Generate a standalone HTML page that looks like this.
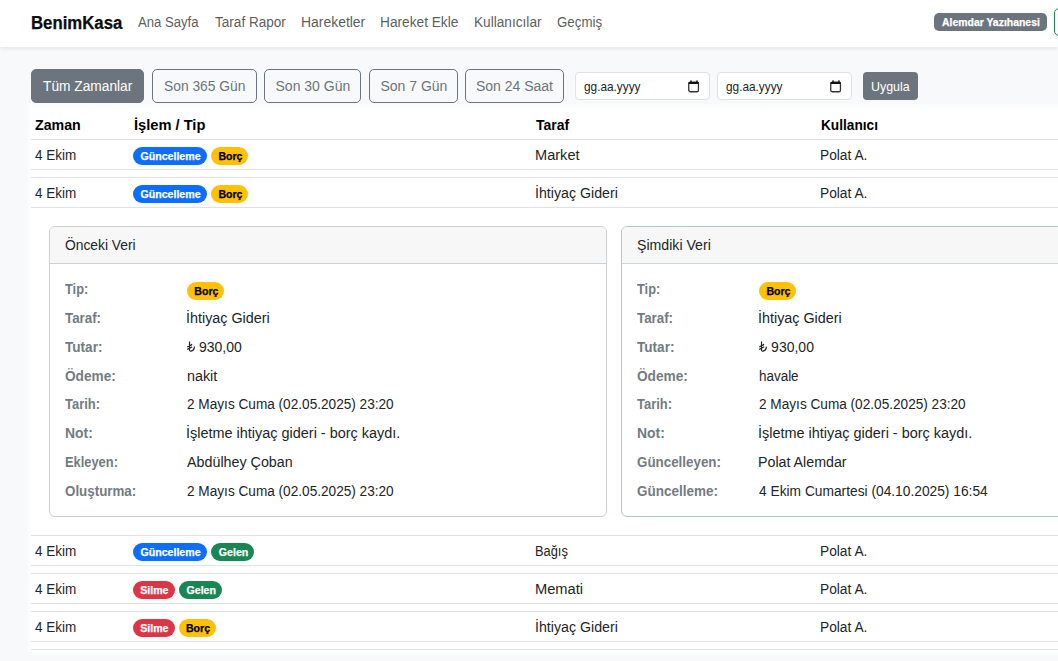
<!DOCTYPE html>
<html><head><meta charset="utf-8"><style>
*{box-sizing:border-box;margin:0;padding:0}
html,body{width:1058px;height:661px;overflow:hidden;background:#f8f9fa;font-family:"Liberation Sans",sans-serif;color:#212529}
#root{position:relative;width:1058px;height:661px;overflow:hidden;background:#f8f9fa}
.a{position:absolute}
.t{position:absolute;white-space:nowrap;line-height:1;transform-origin:0 0}
.nav{position:absolute;left:0;top:0;width:1058px;height:47px;background:#fff;box-shadow:0 2px 4px rgba(0,0,0,.075)}
.tbl{position:absolute;left:31px;top:110px;width:1100px;height:540px;background:#fff;}
.ln{position:absolute;left:31px;width:1100px;height:1px;background:#dee2e6}
.card{position:absolute;top:226px;height:291px;border:1px solid #cdd0d2;border-radius:6px;background:#fff;overflow:hidden}
.ch{position:absolute;left:0;top:0;right:0;height:37px;background:#f7f7f7;border-bottom:1px solid #cdd0d2}
</style></head><body><div id="root">
<div class="nav"></div>
<div class="a" style="left:934px;top:13px;width:113px;height:18px;border-radius:5px;background:#6c757d"></div>
<div class="a" style="left:1054px;top:8px;width:40px;height:28px;border:1px solid #198754;border-radius:5px"></div>
<div class="a" style="left:31px;top:69px;width:113.0px;height:34px;border:1px solid #6c757d;border-radius:5px;background:#6c757d;"></div>
<div class="a" style="left:152px;top:69px;width:105.0px;height:34px;border:1px solid #6c757d;border-radius:5px;"></div>
<div class="a" style="left:264px;top:69px;width:97.0px;height:34px;border:1px solid #6c757d;border-radius:5px;"></div>
<div class="a" style="left:369px;top:69px;width:89.0px;height:34px;border:1px solid #6c757d;border-radius:5px;"></div>
<div class="a" style="left:465px;top:69px;width:99.0px;height:34px;border:1px solid #6c757d;border-radius:5px;"></div>
<div class="a" style="left:575px;top:72px;width:135px;height:28px;background:#fff;border:1px solid #dee2e6;border-radius:4px"></div>
<svg class="a" width="12" height="13" viewBox="0 0 12 13" style="left:688px;top:79.6px"><path d="M2.6 2.4L3 0.5L3.4 2.4M8.6 2.4L9 0.5L9.4 2.4" fill="#111" stroke="#111" stroke-width="0.9"/><rect x="0.75" y="2.25" width="9.7" height="9.5" rx="1.6" fill="none" stroke="#333" stroke-width="1.3"/><rect x="0.4" y="1.9" width="10.4" height="2.2" rx="0.8" fill="#111"/></svg>
<div class="a" style="left:717px;top:72px;width:135px;height:28px;background:#fff;border:1px solid #dee2e6;border-radius:4px"></div>
<svg class="a" width="12" height="13" viewBox="0 0 12 13" style="left:830px;top:79.6px"><path d="M2.6 2.4L3 0.5L3.4 2.4M8.6 2.4L9 0.5L9.4 2.4" fill="#111" stroke="#111" stroke-width="0.9"/><rect x="0.75" y="2.25" width="9.7" height="9.5" rx="1.6" fill="none" stroke="#333" stroke-width="1.3"/><rect x="0.4" y="1.9" width="10.4" height="2.2" rx="0.8" fill="#111"/></svg>
<div class="a" style="left:863px;top:72px;width:55px;height:28px;border-radius:4px;background:#6c757d"></div>
<div class="tbl"></div><div class="a" style="left:26px;top:103px;width:1100px;height:8px;background:linear-gradient(#f8f9fa,#fff)"></div><div class="a" style="left:26px;top:103px;width:6px;height:548px;background:linear-gradient(to right,#f8f9fa,#fff)"></div><div class="a" style="left:32px;top:650px;width:1100px;height:6px;background:linear-gradient(#fff,#f8f9fa)"></div>
<div class="ln" style="top:139px"></div>
<div class="ln" style="top:169px"></div>
<div class="ln" style="top:177px"></div>
<div class="ln" style="top:207px"></div>
<div class="ln" style="top:535px"></div>
<div class="ln" style="top:565px"></div>
<div class="ln" style="top:573px"></div>
<div class="ln" style="top:603px"></div>
<div class="ln" style="top:611px"></div>
<div class="ln" style="top:641px"></div>
<div class="ln" style="top:649px"></div>
<div class="a" style="left:133px;top:147.3px;width:74px;height:18.2px;border-radius:9.1px;background:#0d6efd"></div>
<div class="a" style="left:211.4px;top:147.3px;width:37px;height:18.2px;border-radius:9.1px;background:#ffc107"></div>
<div class="a" style="left:133px;top:185.1px;width:74px;height:18.2px;border-radius:9.1px;background:#0d6efd"></div>
<div class="a" style="left:211.4px;top:185.1px;width:37px;height:18.2px;border-radius:9.1px;background:#ffc107"></div>
<div class="a" style="left:133px;top:543.0px;width:74px;height:18.2px;border-radius:9.1px;background:#0d6efd"></div>
<div class="a" style="left:211.4px;top:543.0px;width:42.7px;height:18.2px;border-radius:9.1px;background:#198754"></div>
<div class="a" style="left:133px;top:581.1px;width:41.7px;height:18.2px;border-radius:9.1px;background:#dc3545"></div>
<div class="a" style="left:179.1px;top:581.1px;width:42.6px;height:18.2px;border-radius:9.1px;background:#198754"></div>
<div class="a" style="left:133px;top:619.2px;width:41.7px;height:18.2px;border-radius:9.1px;background:#dc3545"></div>
<div class="a" style="left:179.1px;top:619.2px;width:36.8px;height:18.2px;border-radius:9.1px;background:#ffc107"></div>
<div class="card" style="left:49px;width:558px"><div class="ch"></div></div>
<div class="card" style="left:621px;width:558px;border-color:#adcbc0"><div class="ch" style="border-bottom-color:#cdd3d1"></div></div>
<div class="a" style="left:187.3px;top:282.0px;width:37px;height:18px;border-radius:9.0px;background:#ffc107"></div>
<svg class="a" width="9" height="11" viewBox="0 0 9 11" style="left:186.7px;top:341.39px"><path d="M2.5 0.4V8.8Q2.5 10.3 3.9 10.1Q7.2 9.4 7.5 5.6M0.2 6L5.2 3.4M0.2 8.4L5.2 5.8" fill="none" stroke="#212529" stroke-width="1.2"/></svg>
<div class="a" style="left:759.4px;top:282.0px;width:37px;height:18px;border-radius:9.0px;background:#ffc107"></div>
<svg class="a" width="9" height="11" viewBox="0 0 9 11" style="left:758.8px;top:341.39px"><path d="M2.5 0.4V8.8Q2.5 10.3 3.9 10.1Q7.2 9.4 7.5 5.6M0.2 6L5.2 3.4M0.2 8.4L5.2 5.8" fill="none" stroke="#212529" stroke-width="1.2"/></svg>
<div class="t" style="left:30.87px;top:14.16px;font-size:18px;font-weight:700;color:#0d0d0d;transform:scaleX(0.9313);-webkit-text-stroke:0.25px currentColor;">BenimKasa</div>
<div class="t" style="left:138.40px;top:14.85px;font-size:14px;font-weight:400;color:#5c5f62;transform:scaleX(0.9365);">Ana Sayfa</div>
<div class="t" style="left:215.30px;top:14.85px;font-size:14px;font-weight:400;color:#5c5f62;transform:scaleX(0.9689);">Taraf Rapor</div>
<div class="t" style="left:301.40px;top:14.85px;font-size:14px;font-weight:400;color:#5c5f62;transform:scaleX(0.9950);">Hareketler</div>
<div class="t" style="left:380.32px;top:14.85px;font-size:14px;font-weight:400;color:#5c5f62;transform:scaleX(0.9778);">Hareket Ekle</div>
<div class="t" style="left:473.82px;top:14.85px;font-size:14px;font-weight:400;color:#5c5f62;transform:scaleX(0.9753);">Kullanıcılar</div>
<div class="t" style="left:556.70px;top:14.85px;font-size:14px;font-weight:400;color:#5c5f62;transform:scaleX(0.9505);">Geçmiş</div>
<div class="t" style="left:941.50px;top:16.69px;font-size:11px;font-weight:700;color:#fff;transform:scaleX(0.9490);-webkit-text-stroke:0.25px currentColor;">Alemdar Yazıhanesi</div>
<div class="t" style="left:42.70px;top:79.05px;font-size:14px;font-weight:400;color:#fff;transform:scaleX(0.9808);">Tüm Zamanlar</div>
<div class="t" style="left:163.80px;top:79.05px;font-size:14px;font-weight:400;color:#6c757d;transform:scaleX(0.9863);">Son 365 Gün</div>
<div class="t" style="left:275.53px;top:79.05px;font-size:14px;font-weight:400;color:#6c757d;">Son 30 Gün</div>
<div class="t" style="left:380.42px;top:79.05px;font-size:14px;font-weight:400;color:#6c757d;">Son 7 Gün</div>
<div class="t" style="left:475.91px;top:79.05px;font-size:14px;font-weight:400;color:#6c757d;">Son 24 Saat</div>
<div class="t" style="left:583.50px;top:79.80px;font-size:13px;font-weight:400;color:#212529;transform:scaleX(0.9083);">gg.aa.yyyy</div>
<div class="t" style="left:725.50px;top:79.80px;font-size:13px;font-weight:400;color:#212529;transform:scaleX(0.9083);">gg.aa.yyyy</div>
<div class="t" style="left:870.57px;top:79.74px;font-size:13.3px;font-weight:400;color:#fff;transform:scaleX(0.9343);">Uygula</div>
<div class="t" style="left:34.80px;top:118.05px;font-size:14px;font-weight:700;color:#000;transform:scaleX(1.0141);">Zaman</div>
<div class="t" style="left:134.20px;top:118.05px;font-size:14px;font-weight:700;color:#000;transform:scaleX(1.0465);">İşlem / Tip</div>
<div class="t" style="left:536.00px;top:118.05px;font-size:14px;font-weight:700;color:#000;">Taraf</div>
<div class="t" style="left:820.80px;top:118.05px;font-size:14px;font-weight:700;color:#000;transform:scaleX(0.9764);">Kullanıcı</div>
<div class="t" style="left:34.80px;top:148.25px;font-size:14px;font-weight:400;color:#212529;transform:scaleX(0.9638);">4 Ekim</div>
<div class="t" style="left:535.16px;top:148.25px;font-size:14px;font-weight:400;color:#212529;transform:scaleX(1.0407);">Market</div>
<div class="t" style="left:819.82px;top:148.25px;font-size:14px;font-weight:400;color:#212529;transform:scaleX(0.9822);">Polat A.</div>
<div class="t" style="left:140.52px;top:150.93px;font-size:10.6px;font-weight:700;color:#fff;-webkit-text-stroke:0.25px currentColor;">Güncelleme</div>
<div class="t" style="left:218.38px;top:150.93px;font-size:10.6px;font-weight:700;color:#000;-webkit-text-stroke:0.25px currentColor;">Borç</div>
<div class="t" style="left:34.80px;top:186.05px;font-size:14px;font-weight:400;color:#212529;transform:scaleX(0.9638);">4 Ekim</div>
<div class="t" style="left:535.19px;top:186.05px;font-size:14px;font-weight:400;color:#212529;transform:scaleX(1.0138);">İhtiyaç Gideri</div>
<div class="t" style="left:819.82px;top:186.05px;font-size:14px;font-weight:400;color:#212529;transform:scaleX(0.9822);">Polat A.</div>
<div class="t" style="left:140.52px;top:188.73px;font-size:10.6px;font-weight:700;color:#fff;-webkit-text-stroke:0.25px currentColor;">Güncelleme</div>
<div class="t" style="left:218.38px;top:188.73px;font-size:10.6px;font-weight:700;color:#000;-webkit-text-stroke:0.25px currentColor;">Borç</div>
<div class="t" style="left:34.80px;top:543.95px;font-size:14px;font-weight:400;color:#212529;transform:scaleX(0.9638);">4 Ekim</div>
<div class="t" style="left:535.28px;top:543.95px;font-size:14px;font-weight:400;color:#212529;transform:scaleX(0.9167);">Bağış</div>
<div class="t" style="left:819.82px;top:543.95px;font-size:14px;font-weight:400;color:#212529;transform:scaleX(0.9822);">Polat A.</div>
<div class="t" style="left:140.52px;top:546.63px;font-size:10.6px;font-weight:700;color:#fff;-webkit-text-stroke:0.25px currentColor;">Güncelleme</div>
<div class="t" style="left:218.87px;top:546.63px;font-size:10.6px;font-weight:700;color:#fff;-webkit-text-stroke:0.25px currentColor;">Gelen</div>
<div class="t" style="left:34.80px;top:582.05px;font-size:14px;font-weight:400;color:#212529;transform:scaleX(0.9638);">4 Ekim</div>
<div class="t" style="left:535.15px;top:582.05px;font-size:14px;font-weight:400;color:#212529;transform:scaleX(1.0472);">Memati</div>
<div class="t" style="left:819.82px;top:582.05px;font-size:14px;font-weight:400;color:#212529;transform:scaleX(0.9822);">Polat A.</div>
<div class="t" style="left:140.26px;top:584.73px;font-size:10.6px;font-weight:700;color:#fff;-webkit-text-stroke:0.25px currentColor;">Silme</div>
<div class="t" style="left:186.52px;top:584.73px;font-size:10.6px;font-weight:700;color:#fff;-webkit-text-stroke:0.25px currentColor;">Gelen</div>
<div class="t" style="left:34.80px;top:620.15px;font-size:14px;font-weight:400;color:#212529;transform:scaleX(0.9638);">4 Ekim</div>
<div class="t" style="left:535.19px;top:620.15px;font-size:14px;font-weight:400;color:#212529;transform:scaleX(1.0138);">İhtiyaç Gideri</div>
<div class="t" style="left:819.82px;top:620.15px;font-size:14px;font-weight:400;color:#212529;transform:scaleX(0.9822);">Polat A.</div>
<div class="t" style="left:140.26px;top:622.83px;font-size:10.6px;font-weight:700;color:#fff;-webkit-text-stroke:0.25px currentColor;">Silme</div>
<div class="t" style="left:185.98px;top:622.83px;font-size:10.6px;font-weight:700;color:#000;-webkit-text-stroke:0.25px currentColor;">Borç</div>
<div class="t" style="left:64.80px;top:238.05px;font-size:14px;font-weight:400;color:#212529;transform:scaleX(0.9864);">Önceki Veri</div>
<div class="t" style="left:64.80px;top:282.05px;font-size:14px;font-weight:700;color:#737b82;transform:scaleX(0.9135);">Tip:</div>
<div class="t" style="left:194.28px;top:285.63px;font-size:10.6px;font-weight:700;color:#000;-webkit-text-stroke:0.25px currentColor;">Borç</div>
<div class="t" style="left:64.80px;top:310.89px;font-size:14px;font-weight:700;color:#737b82;transform:scaleX(0.9517);">Taraf:</div>
<div class="t" style="left:186.28px;top:310.89px;font-size:14px;font-weight:400;color:#212529;transform:scaleX(1.0250);">İhtiyaç Gideri</div>
<div class="t" style="left:64.80px;top:339.74px;font-size:14px;font-weight:700;color:#737b82;transform:scaleX(0.9694);">Tutar:</div>
<div class="t" style="left:199.00px;top:339.74px;font-size:14px;font-weight:400;color:#212529;">930,00</div>
<div class="t" style="left:64.80px;top:368.58px;font-size:14px;font-weight:700;color:#737b82;transform:scaleX(0.9755);">Ödeme:</div>
<div class="t" style="left:187.30px;top:368.58px;font-size:14px;font-weight:400;color:#212529;transform:scaleX(1.0242);">nakit</div>
<div class="t" style="left:64.80px;top:397.42px;font-size:14px;font-weight:700;color:#737b82;transform:scaleX(0.9250);">Tarih:</div>
<div class="t" style="left:187.30px;top:397.42px;font-size:14px;font-weight:400;color:#212529;transform:scaleX(0.9729);">2 Mayıs Cuma (02.05.2025) 23:20</div>
<div class="t" style="left:64.80px;top:426.27px;font-size:14px;font-weight:700;color:#737b82;transform:scaleX(0.9955);">Not:</div>
<div class="t" style="left:186.27px;top:426.27px;font-size:14px;font-weight:400;color:#212529;transform:scaleX(1.0318);">İşletme ihtiyaç gideri - borç kaydı.</div>
<div class="t" style="left:64.80px;top:455.11px;font-size:14px;font-weight:700;color:#737b82;transform:scaleX(0.9188);">Ekleyen:</div>
<div class="t" style="left:187.30px;top:455.11px;font-size:14px;font-weight:400;color:#212529;transform:scaleX(1.0211);">Abdülhey Çoban</div>
<div class="t" style="left:64.80px;top:483.95px;font-size:14px;font-weight:700;color:#737b82;transform:scaleX(0.9539);">Oluşturma:</div>
<div class="t" style="left:187.30px;top:483.95px;font-size:14px;font-weight:400;color:#212529;transform:scaleX(0.9729);">2 Mayıs Cuma (02.05.2025) 23:20</div>
<div class="t" style="left:636.60px;top:238.05px;font-size:14px;font-weight:400;color:#212529;transform:scaleX(1.0093);">Şimdiki Veri</div>
<div class="t" style="left:636.60px;top:282.05px;font-size:14px;font-weight:700;color:#737b82;transform:scaleX(0.9135);">Tip:</div>
<div class="t" style="left:766.38px;top:285.63px;font-size:10.6px;font-weight:700;color:#000;-webkit-text-stroke:0.25px currentColor;">Borç</div>
<div class="t" style="left:636.60px;top:310.89px;font-size:14px;font-weight:700;color:#737b82;transform:scaleX(0.9517);">Taraf:</div>
<div class="t" style="left:758.38px;top:310.89px;font-size:14px;font-weight:400;color:#212529;transform:scaleX(1.0250);">İhtiyaç Gideri</div>
<div class="t" style="left:636.60px;top:339.74px;font-size:14px;font-weight:700;color:#737b82;transform:scaleX(0.9694);">Tutar:</div>
<div class="t" style="left:771.10px;top:339.74px;font-size:14px;font-weight:400;color:#212529;">930,00</div>
<div class="t" style="left:636.60px;top:368.58px;font-size:14px;font-weight:700;color:#737b82;transform:scaleX(0.9755);">Ödeme:</div>
<div class="t" style="left:759.40px;top:368.58px;font-size:14px;font-weight:400;color:#212529;transform:scaleX(0.9598);">havale</div>
<div class="t" style="left:636.60px;top:397.42px;font-size:14px;font-weight:700;color:#737b82;transform:scaleX(0.9250);">Tarih:</div>
<div class="t" style="left:759.40px;top:397.42px;font-size:14px;font-weight:400;color:#212529;transform:scaleX(0.9729);">2 Mayıs Cuma (02.05.2025) 23:20</div>
<div class="t" style="left:636.60px;top:426.27px;font-size:14px;font-weight:700;color:#737b82;transform:scaleX(0.9955);">Not:</div>
<div class="t" style="left:758.37px;top:426.27px;font-size:14px;font-weight:400;color:#212529;transform:scaleX(1.0318);">İşletme ihtiyaç gideri - borç kaydı.</div>
<div class="t" style="left:636.60px;top:455.11px;font-size:14px;font-weight:700;color:#737b82;transform:scaleX(0.9547);">Güncelleyen:</div>
<div class="t" style="left:758.38px;top:455.11px;font-size:14px;font-weight:400;color:#212529;transform:scaleX(1.0164);">Polat Alemdar</div>
<div class="t" style="left:636.60px;top:483.95px;font-size:14px;font-weight:700;color:#737b82;transform:scaleX(0.9632);">Güncelleme:</div>
<div class="t" style="left:759.40px;top:483.95px;font-size:14px;font-weight:400;color:#212529;transform:scaleX(0.9829);">4 Ekim Cumartesi (04.10.2025) 16:54</div>
</div></body></html>
